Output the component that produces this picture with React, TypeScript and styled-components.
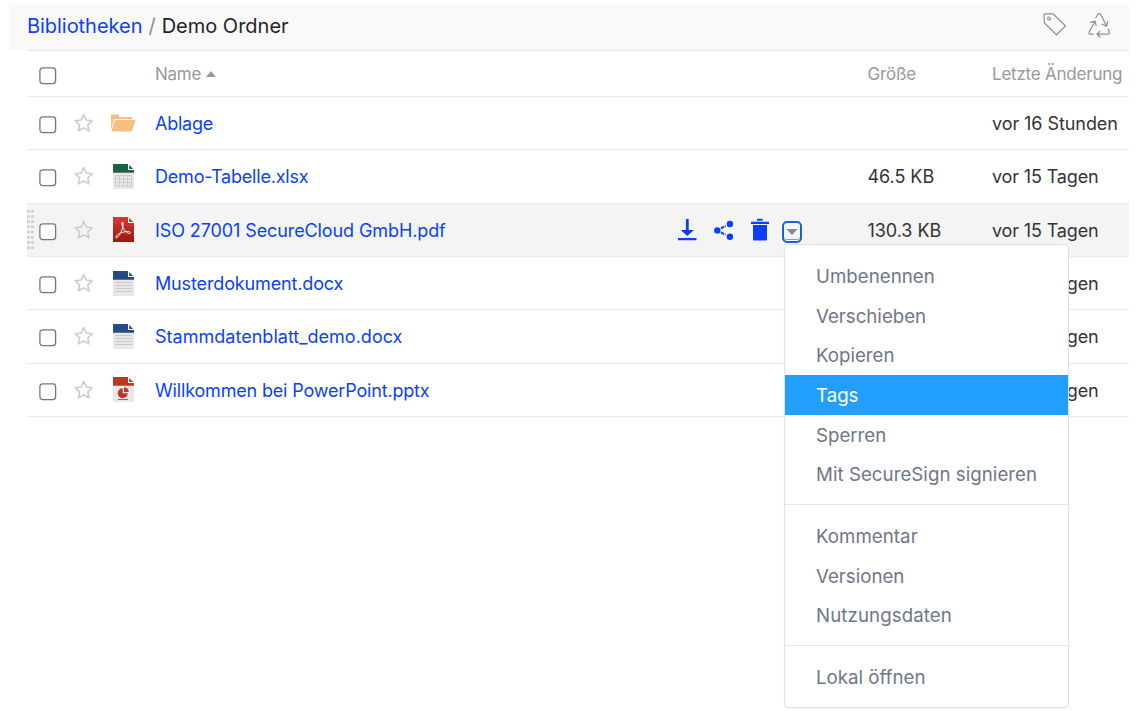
import React from "react";
import styled, { createGlobalStyle, css } from "styled-components";

const GlobalStyle = createGlobalStyle`
  * { box-sizing: border-box; }
  body {
    margin: 0;
    background: #fff;
    color: #333;
    font-family: Inter, "Liberation Sans", sans-serif;
    font-size: 18px;
    overflow: hidden;
  }
`;

const Page = styled.main`
  width: 1139px;
  height: 711px;
  padding: 3px 10px 0 9px;
`;

const PathBar = styled.header`
  display: flex;
  justify-content: space-between;
  height: 47px;
  padding: 0 18px;
  background: #f9f9f9;
`;

const Breadcrumb = styled.nav`
  display: flex;
  align-items: center;
  gap: 6px;
  height: 46px;
  font-size: 20px;
  white-space: nowrap;
`;

const Crumb = styled.span<{ $color: string; $spacing?: number }>`
  color: ${(p) => p.$color};
  letter-spacing: ${(p) => p.$spacing ?? 0}px;
`;

const Tools = styled.div`
  display: flex;
  gap: 20px;
  padding-top: 9px;
`;

const Table = styled.section`
  margin-left: 18px;
  border-top: 1px solid #e6e6e6;
`;

const grid = css`
  display: grid;
  grid-template-columns: 12px 33px 39px 44px 523px 189.5px 124.5px 137px;
  align-items: center;
`;

const HeadRow = styled.div`
  ${grid}
  height: 46px;
  border-bottom: 1px solid #ececec;
  color: #999;
  font-size: 17px;
  white-space: nowrap;
`;

const Row = styled.div<{ $active?: boolean }>`
  ${grid}
  height: 53.33px;
  border-bottom: 1px solid #ececec;
  background: ${(p) => (p.$active ? "#f4f4f4" : "#fff")};
  white-space: nowrap;
`;

const Text = styled.span<{ $spacing?: number }>`
  letter-spacing: ${(p) => p.$spacing ?? 0}px;
`;

const Cell = styled(Text)`
  padding-top: 0.7px;
`;

const NameLink = styled(Cell)`
  color: #0a3fff;
`;

const Grip = styled.span`
  display: block;
  width: 7px;
  height: 40px;
  background-image: linear-gradient(#d0d0d0 3px, transparent 3px);
  background-size: 100% 5.2px;
  mask-image: linear-gradient(90deg, #000 3px, transparent 3px, transparent 4px, #000 4px);
`;

const Actions = styled.div`
  position: relative;
  display: flex;
  align-items: center;
  gap: 16px;
  height: 100%;
`;

const Toggle = styled.button`
  display: flex;
  align-items: center;
  justify-content: center;
  width: 20px;
  height: 22px;
  margin: 4px 0 0 -4px;
  padding: 0;
  border: 2px solid #0f68d0;
  border-radius: 5px;
  background: #f4f4f4;
  box-shadow: inset 0 -1px 0 #fff, inset 0 -2px 0 #999, 0 0 0 1px #fff;
`;

const Menu = styled.div`
  position: absolute;
  z-index: 2;
  top: 40.5px;
  left: 106px;
  width: 285px;
  padding: 11px 0 10px;
  border: 1px solid #dde1ec;
  border-radius: 4px;
  background: #fff;
  box-shadow: 0 1px 2px rgba(0, 0, 0, 0.06);
`;

const MenuItem = styled.div<{ $active?: boolean; $spacing?: number }>`
  display: flex;
  align-items: center;
  height: 39.67px;
  padding: 1px 31px 0;
  font-size: 18.67px;
  color: ${(p) => (p.$active ? "#fff" : "#6e7687")};
  background: ${(p) => (p.$active ? "#219fff" : "transparent")};
  letter-spacing: ${(p) => p.$spacing ?? 0}px;
`;

const Divider = styled.div`
  height: 1px;
  margin: 10px 0 11px;
  background: #e4e8ee;
`;

const CheckSvg = styled.svg`
  display: block;
  margin-top: 4px;
`;

const Check = () => (
  <CheckSvg width="18" height="18" viewBox="0 0 18 18">
    <rect x=".9" y=".9" width="15.7" height="15.7" rx="2.8" fill="#fff" stroke="#767676" strokeWidth="1.3" />
  </CheckSvg>
);

const StarIcon = () => (
  <svg width="20" height="20" viewBox="0 0 20 20" fill="none" stroke="#ccc" strokeWidth="1.6" strokeLinejoin="round">
    <path d="M9.7 1.5 12.2 7l6 .7-4.4 4.1 1.2 6L9.7 14.9 4.4 17.8l1.2-6L1.2 7.7l6-.7Z" />
  </svg>
);

const FolderIcon = () => (
  <svg width="25" height="18" viewBox="0 0 25 18" fill="#f6bf80">
    <path d="M0 16V1.2Q0 .4.8.4h6.4q.8 0 .8.8V3h12.2q.8 0 .8.8V5H4.2q-1 0-1.3.9Z" />
    <path d="M4.9 6h18.9q.9 0 .6.8l-3.4 10q-.3.8-1.1.8H1.1q-.9 0-.6-.8L3.8 6.8Q4.1 6 4.9 6Z" />
  </svg>
);

type FileKind = "xlsx" | "pdf" | "docx" | "pptx";

const FileIcon = ({ kind }: { kind: FileKind }) => {
  const top = { xlsx: "#1f6040", pdf: "#cf342c", docx: "#264b83", pptx: "#b93a22" }[kind];
  return (
    <svg width="21" height="25" viewBox="0 0 21 25">
      <defs>
        <linearGradient id="pdfRed" x1="0" y1="0" x2="0" y2="1">
          <stop offset="0" stopColor="#d63a34" />
          <stop offset="1" stopColor="#9c1710" />
        </linearGradient>
      </defs>
      <path d="M0 0h15l6 6v19H0Z" fill={kind === "pdf" ? "url(#pdfRed)" : "#e8e8e8"} />
      {kind !== "pdf" && <path d="M0 0h15v6h6v2.7H0Z" fill={top} />}
      <path d="M15 0v6h6Z" fill="#fff" />
      <path d="M16.2 1v4h4Z" fill={top} />
      {kind === "xlsx" && (
        <path
          d="M2.5 11.5h16v10.5h-16ZM2.5 15h16M2.5 18.5h16M6.5 11.5V22M10.5 11.5V22M14.5 11.5V22"
          fill="none"
          stroke="#c4c4c4"
          strokeWidth=".8"
        />
      )}
      {kind === "docx" && (
        <path d="M2 11.5h17M2 14.5h17M2 17.5h17M2 20.5h17" stroke="#c6c6c6" strokeWidth=".9" />
      )}
      {kind === "pdf" && (
        <path
          d="M9.6 5.2c-1.2 0-.9 2.5.3 5 1.3 2.8 3.4 5.8 6.2 6.2 2 .2 2-1.7-.4-1.9-3.3-.3-7.2.9-10.1 2.5-2.6 1.4-3.6 3.7-2.4 3.9 1.6.2 4-3.9 5.3-6.9 1.3-3 2.4-8.8 1.1-8.8Z"
          fill="none"
          stroke="#fff"
          strokeWidth=".9"
        />
      )}
      {kind === "pptx" && (
        <g fill={top}>
          <path d="M9.7 11.2v5h5a5 5 0 1 1-5-5Z" />
          <path d="M11 10.2a4.8 4.8 0 0 1 4.7 4.7H11Z" />
          <path d="M5 22.2h10v.8H5Z" />
        </g>
      )}
    </svg>
  );
};

const TagIcon = () => (
  <svg width="25" height="25" viewBox="0 0 25 25" fill="none" stroke="#909090" strokeWidth="1.2" strokeLinejoin="round">
    <path d="M1.9 2.8q0-1 1-1h7.9L23.5 13.9 14.5 22.8 2.4 11Z" />
    <circle cx="7" cy="6.4" r="1.4" />
  </svg>
);

const RecycleIcon = () => (
  <svg width="24" height="26" viewBox="0 0 24 26" fill="none" stroke="#909090" strokeWidth="1.2" strokeLinejoin="round" strokeLinecap="round">
    <path d="M8.8 5.7 11 2.2q1.3-1.3 2.6 0L19.6 14M15 12.2l4.6 2 1-4.8" />
    <path d="M21.2 17.3l1.2 3q.4 1.9-1.5 1.9H10.2M13 19.2l-3 3L13 25" />
    <path d="M6.3 22.2H3.2Q1.4 22.2 2.1 20L8 9.3M3.5 10.3l4.6-1.2 1 4.5" />
  </svg>
);

const DownloadIcon = () => (
  <svg width="20" height="22" viewBox="0 0 20 22" fill="#0a3fff">
    <path d="M7.9 0h2.8v11h5.2L9.3 17 2.7 11h5.2ZM0 19h18.5v2.2H0Z" />
  </svg>
);

const ShareIcon = () => (
  <svg width="20" height="20" viewBox="0 0 20 20" fill="#0a3fff">
    <circle cx="3.3" cy="10.4" r="3.2" />
    <circle cx="15.9" cy="4" r="3.2" />
    <circle cx="15.9" cy="16.8" r="3.2" />
    <path d="M7 8.4 11.6 5.9M7 12.4l4.6 2.5" stroke="#0a3fff" strokeWidth="2" strokeDasharray="3.5 1" />
  </svg>
);

const TrashIcon = () => (
  <svg width="20" height="23" viewBox="0 0 20 23" fill="#0a3fff">
    <path d="M7 .8h5.6v1.9H7ZM1 3.7h18v2.2H1ZM3 7h14v14.7q0 .8-.8.8H3.8q-.8 0-.8-.8Z" />
  </svg>
);

const CaretIcon = () => (
  <svg width="12" height="6" viewBox="0 0 12 6" fill="#888">
    <path d="M.5 0h11L6 6Z" />
  </svg>
);

const SortIcon = styled.span`
  display: inline-block;
  margin-left: 4.5px;
  border: 5.5px solid transparent;
  border-top: 0;
  border-bottom: 6px solid #999;
  transform: translateY(-3px);
`;

const Slot = styled.span<{ $x?: number; $top?: number }>`
  display: flex;
  padding-left: ${(p) => p.$x ?? 0}px;
  padding-top: ${(p) => p.$top ?? 0}px;
`;

interface Entry {
  name: string;
  spacing: number;
  kind: FileKind | "folder";
  size?: string;
  date: string;
  active?: boolean;
}

const entries: Entry[] = [
  { name: "Ablage", spacing: -0.25, kind: "folder", date: "vor 16 Stunden" },
  { name: "Demo-Tabelle.xlsx", spacing: -0.2, kind: "xlsx", size: "46.5 KB", date: "vor 15 Tagen" },
  { name: "ISO 27001 SecureCloud GmbH.pdf", spacing: -0.1, kind: "pdf", size: "130.3 KB", date: "vor 15 Tagen", active: true },
  { name: "Musterdokument.docx", spacing: -0.14, kind: "docx", date: "vor 15 Tagen" },
  { name: "Stammdatenblatt_demo.docx", spacing: 0.02, kind: "docx", date: "vor 15 Tagen" },
  { name: "Willkommen bei PowerPoint.pptx", spacing: -0.17, kind: "pptx", date: "vor 15 Tagen" },
];

const menuGroups: { label: string; spacing: number; active?: boolean }[][] = [
  [
    { label: "Umbenennen", spacing: 0.05 },
    { label: "Verschieben", spacing: 0 },
    { label: "Kopieren", spacing: 0 },
    { label: "Tags", spacing: 0, active: true },
    { label: "Sperren", spacing: 0 },
    { label: "Mit SecureSign signieren", spacing: 0.05 },
  ],
  [
    { label: "Kommentar", spacing: 0.05 },
    { label: "Versionen", spacing: 0 },
    { label: "Nutzungsdaten", spacing: 0.1 },
  ],
  [{ label: "Lokal öffnen", spacing: 0 }],
];

const ContextMenu = () => (
  <Menu>
    {menuGroups.map((group, i) => (
      <React.Fragment key={i}>
        {i > 0 && <Divider />}
        {group.map((item) => (
          <MenuItem key={item.label} $active={item.active} $spacing={item.spacing}>
            {item.label}
          </MenuItem>
        ))}
      </React.Fragment>
    ))}
  </Menu>
);

export default function App() {
  return (
    <Page>
      <GlobalStyle />
      <PathBar>
        <Breadcrumb>
          <Crumb $color="#0a3fff" $spacing={-0.04}>Bibliotheken</Crumb>
          <Crumb $color="#868e96">/</Crumb>
          <Crumb $color="#212529">Demo Ordner</Crumb>
        </Breadcrumb>
        <Tools>
          <TagIcon />
          <RecycleIcon />
        </Tools>
      </PathBar>
      <Table>
        <HeadRow>
          <span />
          <Check />
          <span />
          <span />
          <Text $spacing={-0.25}>
            Name
            <SortIcon />
          </Text>
          <span />
          <Text $spacing={-0.15}>Größe</Text>
          <Text $spacing={-0.22}>Letzte Änderung</Text>
        </HeadRow>
        {entries.map((e) => (
          <Row key={e.name} $active={e.active}>
            <span>{e.active && <Grip />}</span>
            <Check />
            <Slot $x={2}>
              <StarIcon />
            </Slot>
            <Slot $x={e.kind === "folder" ? 0 : 2}>
              {e.kind === "folder" ? <FolderIcon /> : <FileIcon kind={e.kind} />}
            </Slot>
            <NameLink $spacing={e.spacing}>{e.name}</NameLink>
            {e.active ? (
              <Actions>
                <DownloadIcon />
                <ShareIcon />
                <TrashIcon />
                <Toggle>
                  <CaretIcon />
                </Toggle>
                <ContextMenu />
              </Actions>
            ) : (
              <span />
            )}
            <Cell $spacing={-0.05}>{e.size}</Cell>
            <Cell $spacing={e.date.endsWith("Tagen") ? -0.15 : -0.07}>{e.date}</Cell>
          </Row>
        ))}
      </Table>
    </Page>
  );
}
